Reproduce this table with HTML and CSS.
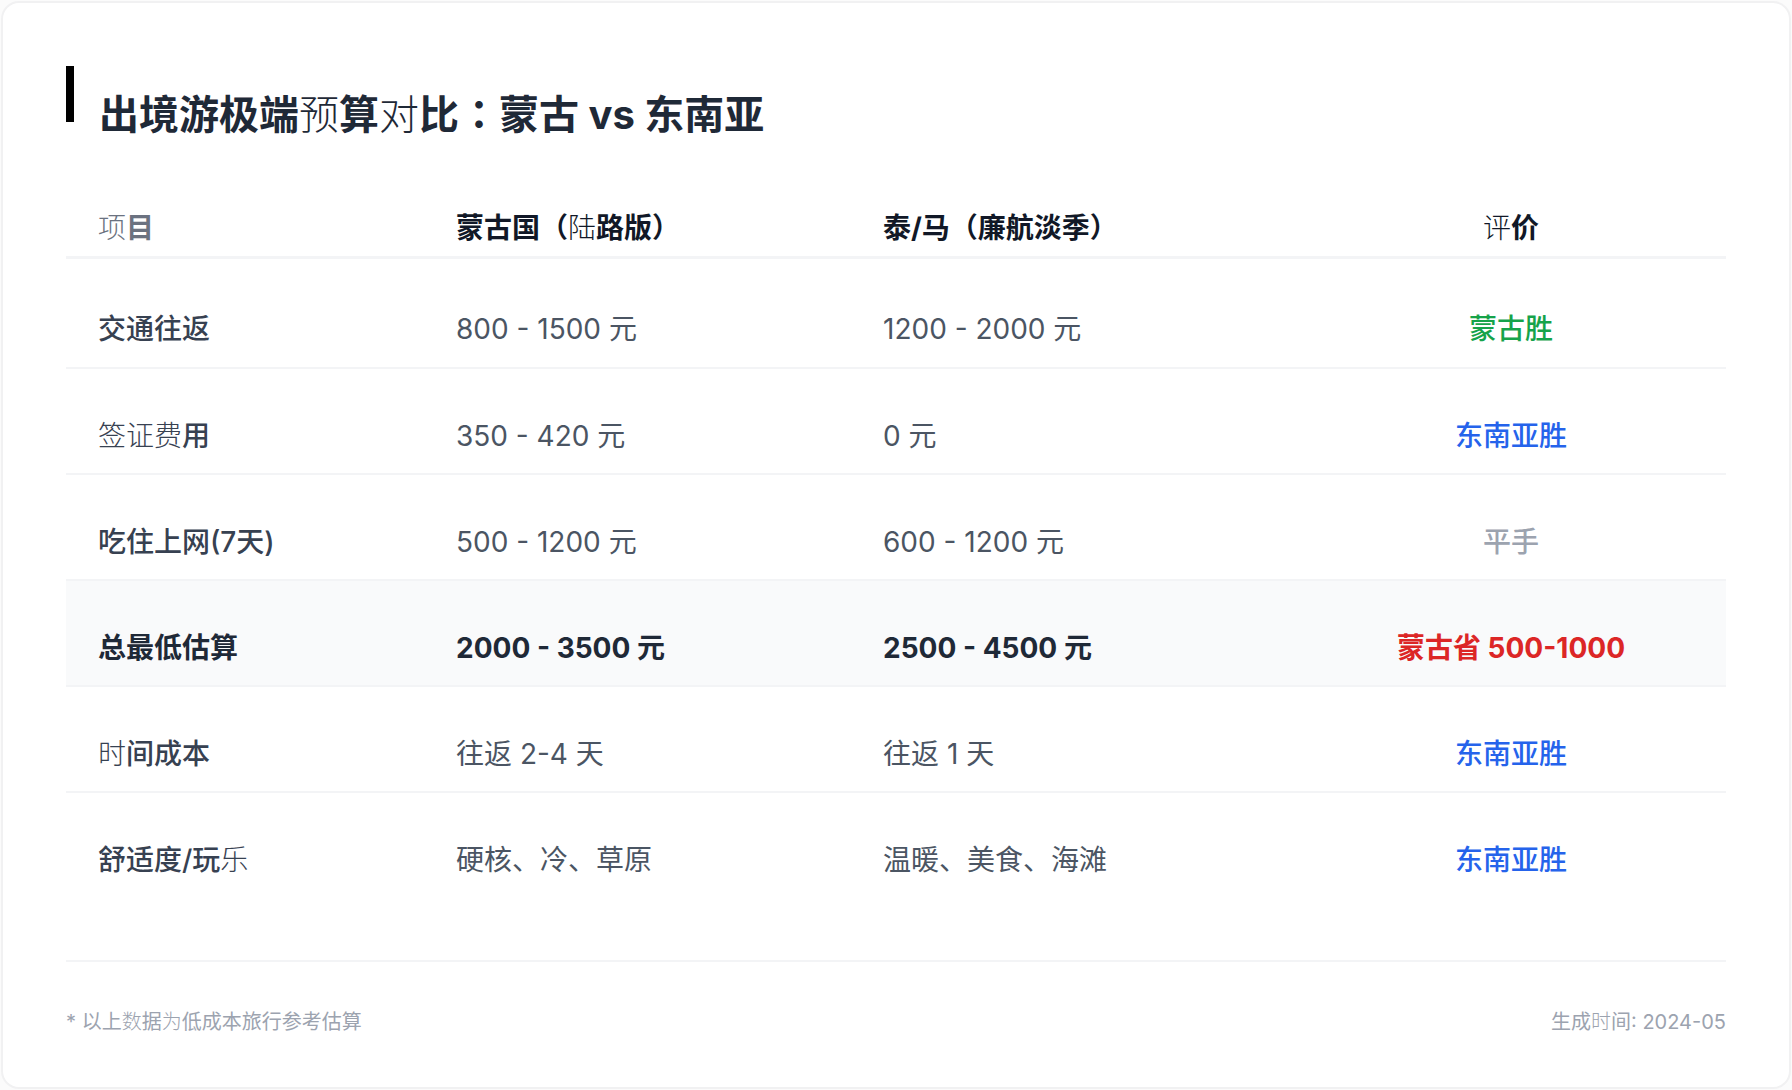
FILE: index.html
```html
<!DOCTYPE html>
<html lang="zh-CN">
<head>
<meta charset="utf-8">
<title>出境游极端预算对比</title>
<link rel="stylesheet" href="styles.css">
</head>
<body>
<div class="card">
  <header class="title-row">
    <span class="bar"></span>
    <h1 class="title">出境游极端<span class="alt">预</span>算<span class="alt">对</span>比<span class="punct" lang="ja">：</span>蒙古 vs 东南亚</h1>
  </header>
  <table class="cmp">
    <colgroup>
      <col class="c1"><col class="c2"><col class="c3"><col class="c4">
    </colgroup>
    <thead>
      <tr>
        <th class="muted"><span class="alt">项</span>目</th>
        <th>蒙古国（<span class="alt">陆</span>路版）</th>
        <th>泰/马（廉航淡季）</th>
        <th class="center"><span class="alt">评</span>价</th>
      </tr>
    </thead>
    <tbody>
      <tr>
        <td class="label">交通往返</td>
        <td>800 - 1500 元</td>
        <td>1200 - 2000 元</td>
        <td class="center res green">蒙古胜</td>
      </tr>
      <tr>
        <td class="label"><span class="alt">签证费</span>用</td>
        <td>350 - 420 元</td>
        <td>0 元</td>
        <td class="center res blue">东南亚胜</td>
      </tr>
      <tr>
        <td class="label">吃住上网(7天)</td>
        <td>500 - 1200 元</td>
        <td>600 - 1200 元</td>
        <td class="center res gray">平手</td>
      </tr>
      <tr class="total">
        <td class="label">总最低估算</td>
        <td>2000 - 3500 元</td>
        <td>2500 - 4500 元</td>
        <td class="center res red">蒙古省 500-1000</td>
      </tr>
      <tr>
        <td class="label"><span class="alt">时</span>间成本</td>
        <td>往返 2-4 天</td>
        <td>往返 1 天</td>
        <td class="center res blue">东南亚胜</td>
      </tr>
      <tr>
        <td class="label">舒适度/玩<span class="alt">乐</span></td>
        <td>硬核、冷、草原</td>
        <td>温暖、美食、海滩</td>
        <td class="center res blue">东南亚胜</td>
      </tr>
    </tbody>
  </table>
  <footer class="foot">
    <span>* 以上<span class="alt">数</span>据<span class="alt">为</span>低成本旅行参考估算</span>
    <span>生成<span class="alt">时</span>间: 2024-05</span>
  </footer>
</div>
</body>
</html>
```

FILE: styles.css
```css
* { box-sizing: border-box; }

html, body {
  margin: 0;
  padding: 0;
  background: #fbfbfb;
}

body {
  font-family: Inter, "Noto Sans CJK SC", sans-serif;
  color: #1f2937;
}

.card {
  margin: 1px;
  width: 1790px;
  height: 1088px;
  background: #ffffff;
  border: 2px solid #f1f1f2;
  border-radius: 18px;
  padding: 63px 63px 55px;
}

.title-row {
  display: flex;
  align-items: flex-start;
  gap: 25px;
}

.bar {
  flex: none;
  width: 8px;
  height: 56px;
  background: #000000;
}

.title {
  margin: 0;
  padding-top: 20px;
  font-size: 40px;
  line-height: 58px;
  font-weight: 700;
  color: #1f2937;
}

.punct {
  font-family: "Noto Sans CJK JP", "Noto Sans CJK TC", sans-serif;
  line-height: 1;
}

.alt {
  font-weight: 300;
}

.cmp {
  margin-top: 38px;
  width: 100%;
  border-collapse: collapse;
  table-layout: fixed;
  font-size: 28px;
  line-height: 40px;
}

.c1 { width: 358px; }
.c2 { width: 427px; }
.c3 { width: 445px; }
.c4 { width: 430px; }

.cmp th {
  text-align: left;
  padding: 26px 32px 8px;
  font-weight: 700;
  color: #111827;
  border-bottom: 3px solid #f3f4f6;
}

.cmp th.muted {
  color: #6b7280;
}

.cmp td {
  padding: 47px 32px 17px;
  color: #4b5563;
  font-weight: 400;
  border-bottom: 2px solid #f3f4f6;
  white-space: nowrap;
}

.cmp tbody tr:first-child td {
  padding-top: 50px;
  padding-bottom: 18px;
}

.cmp tbody tr:last-child td {
  border-bottom: none;
}

.cmp .center {
  text-align: center;
}

.cmp td.label {
  color: #374151;
  font-weight: 500;
}

.cmp td.res { font-weight: 500; }
.cmp td.green { color: #16a34a; }
.cmp td.blue { color: #2563eb; }
.cmp td.gray { color: #9ca3af; }

.cmp tr.total td {
  background: #f9fafb;
  color: #1f2937;
  font-weight: 700;
}

.cmp tr.total td.red {
  color: #dc2626;
}

.foot {
  margin-top: 63px;
  border-top: 2px solid #f3f4f6;
  padding-top: 46px;
  display: flex;
  justify-content: space-between;
  font-size: 20px;
  line-height: 28px;
  color: #9ca3af;
}
```
